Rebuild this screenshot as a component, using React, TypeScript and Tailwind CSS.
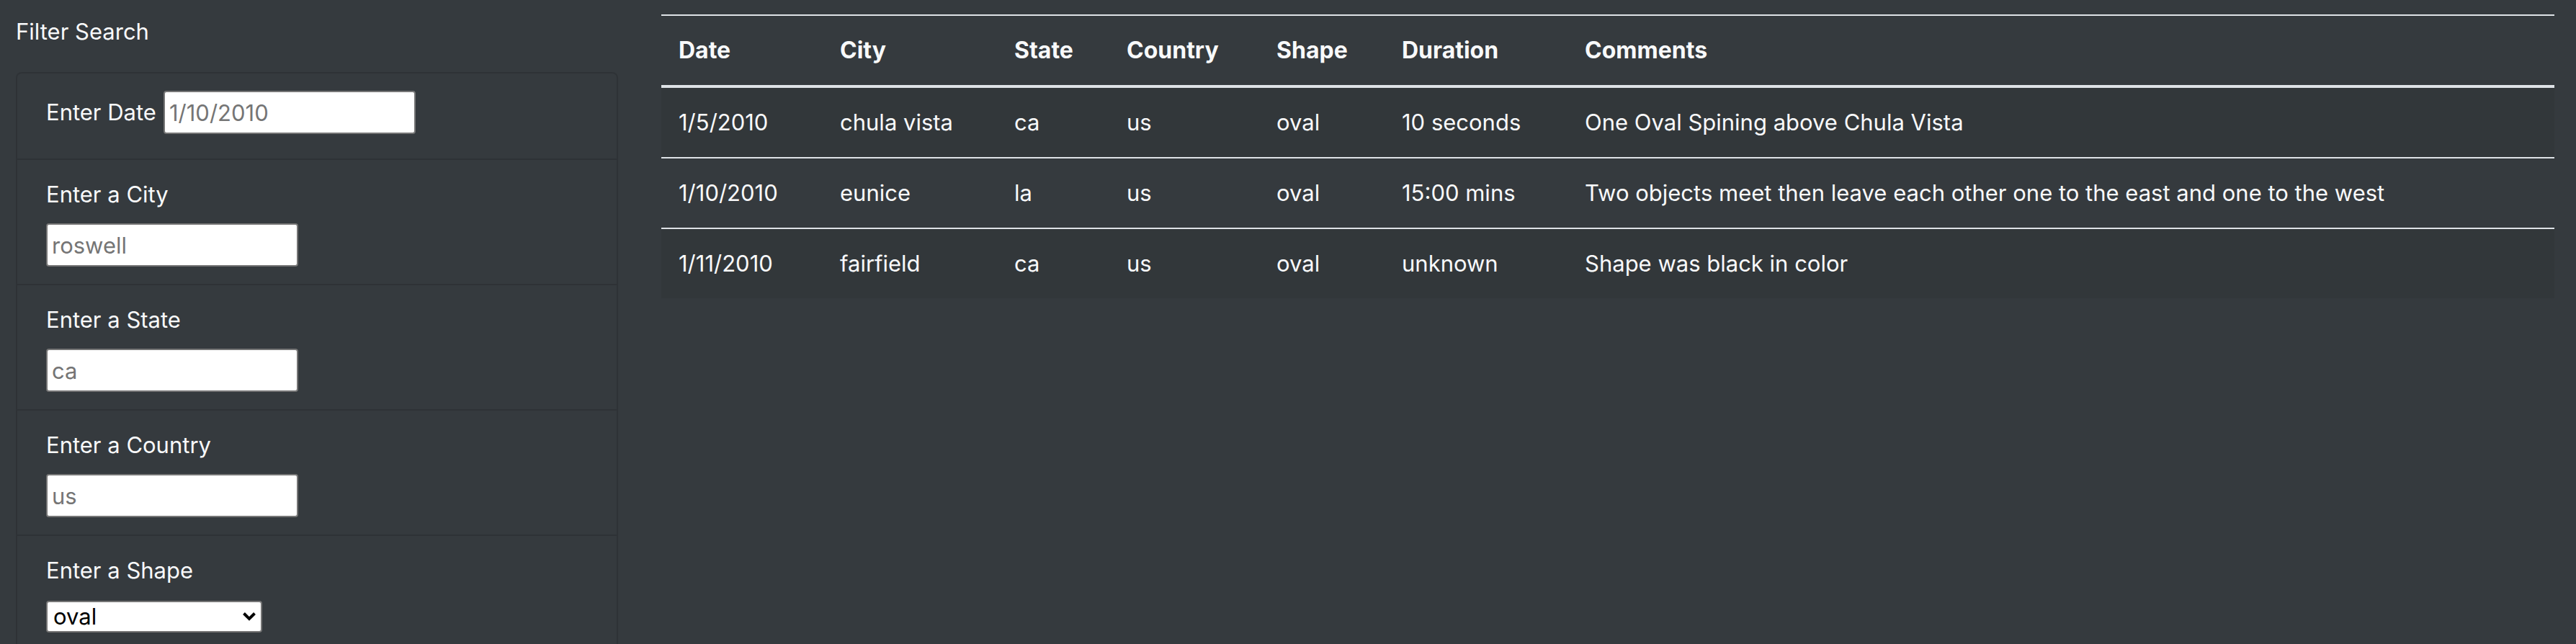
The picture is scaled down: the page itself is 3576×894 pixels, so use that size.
import { ChangeEvent, useState } from "react";

type Sighting = {
  date: string;
  city: string;
  state: string;
  country: string;
  shape: string;
  duration: string;
  comments: string;
};

const sightings: Sighting[] = [
  { date: "1/5/2010", city: "chula vista", state: "ca", country: "us", shape: "oval", duration: "10 seconds", comments: "One Oval Spining above Chula Vista" },
  { date: "1/10/2010", city: "eunice", state: "la", country: "us", shape: "oval", duration: "15:00 mins", comments: "Two objects meet then leave each other one to the east and one to the west" },
  { date: "1/11/2010", city: "fairfield", state: "ca", country: "us", shape: "oval", duration: "unknown", comments: "Shape was black in color" },
];

const columns: { key: keyof Sighting; title: string; width: string }[] = [
  { key: "date", title: "Date", width: "w-[224px]" },
  { key: "city", title: "City", width: "w-[242px]" },
  { key: "state", title: "State", width: "w-[156px]" },
  { key: "country", title: "Country", width: "w-[208px]" },
  { key: "shape", title: "Shape", width: "w-[174px]" },
  { key: "duration", title: "Duration", width: "w-[254px]" },
  { key: "comments", title: "Comments", width: "w-auto" },
];

const textFilters = [
  { id: "city", label: "Enter a City", placeholder: "roswell" },
  { id: "state", label: "Enter a State", placeholder: "ca" },
  { id: "country", label: "Enter a Country", placeholder: "us" },
];

function TextBox({ id, placeholder }: { id: string; placeholder: string }) {
  return (
    <input
      id={id}
      type="text"
      placeholder={placeholder}
      className="block h-[60px] w-[350px] rounded-[4px] border-2 border-[#767676] bg-white px-[6px] leading-[48px] text-black placeholder:text-[#757575]"
    />
  );
}

function ShapeSelect() {
  const [shape, setShape] = useState("oval");
  return (
    <div className="relative w-[300px]">
      <select
        id="shape"
        value={shape}
        onChange={(e: ChangeEvent<HTMLSelectElement>) => setShape(e.target.value)}
        className="block h-11 w-full appearance-none rounded-[4px] border-2 border-[#767676] bg-white pl-2 pr-10 leading-10 text-black"
      >
        <option>oval</option>
        <option>circle</option>
        <option>disk</option>
        <option>light</option>
        <option>triangle</option>
      </select>
      <svg viewBox="0 0 20 14" className="pointer-events-none absolute right-2 top-[15px] h-[14px] w-5" aria-hidden="true">
        <path d="M2.5 2.5 10 10l7.500-7.500" fill="none" stroke="#000" strokeWidth="4" />
      </svg>
    </div>
  );
}

export default function App() {
  return (
    <div className="min-h-screen bg-[#353a3e] pl-[22px] pr-[30px] pt-5 font-[Inter,sans-serif] text-[31px] leading-[48px] text-[#f8f9fa]">
      <div className="grid grid-cols-[836fr_2628fr] items-start gap-[60px]">
        <aside>
          <p className="mb-8">Filter Search</p>
          <form>
            <ul className="divide-y-2 divide-black/12 rounded-t-lg border-2 border-b-0 border-black/12">
              <li className="flex items-center gap-[10px] px-10 pb-[34px] pt-6">
                <label htmlFor="date">Enter Date</label>
                <TextBox id="date" placeholder="1/10/2010" />
              </li>
              {textFilters.map((f) => (
                <li key={f.id} className="px-10 py-6">
                  <label htmlFor={f.id} className="mb-4 block">{f.label}</label>
                  <TextBox id={f.id} placeholder={f.placeholder} />
                </li>
              ))}
              <li className="px-10 pb-4 pt-6">
                <label htmlFor="shape" className="mb-[18px] block">Enter a Shape</label>
                <ShapeSelect />
              </li>
            </ul>
          </form>
        </aside>
        <main>
          <table className="w-full table-fixed border-separate border-spacing-0 text-left">
            <thead>
              <tr>
                {columns.map((c) => (
                  <th key={c.key} scope="col" className={`${c.width} border-b-4 border-t-2 border-[#dee2e6] p-6 text-[32px] leading-[48px] font-bold`}>
                    {c.title}
                  </th>
                ))}
              </tr>
            </thead>
            <tbody className="[&>tr:nth-child(odd)]:bg-black/5 [&>tr:not(:first-child)>td]:border-t-2">
              {sightings.map((s) => (
                <tr key={s.date}>
                  {columns.map((c) => (
                    <td key={c.key} className="whitespace-nowrap border-[#dee2e6] p-6">
                      {s[c.key]}
                    </td>
                  ))}
                </tr>
              ))}
            </tbody>
          </table>
        </main>
      </div>
    </div>
  );
}
